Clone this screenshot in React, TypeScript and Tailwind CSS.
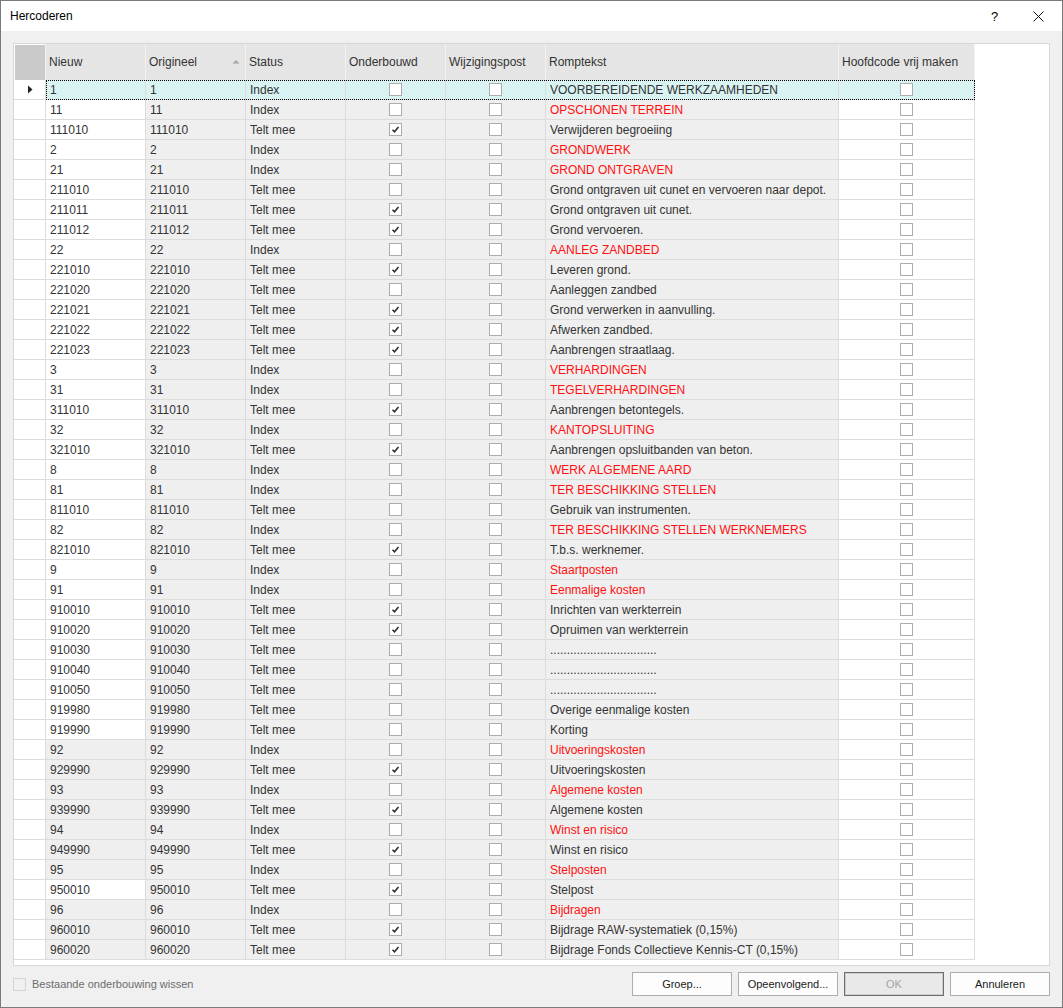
import clsx from "clsx";

type Row = [code: string, status: string, onder: boolean, text: string];

const rows: Row[] = [
  ["1", "Index", false, "VOORBEREIDENDE WERKZAAMHEDEN"],
  ["11", "Index", false, "OPSCHONEN TERREIN"],
  ["111010", "Telt mee", true, "Verwijderen begroeiing"],
  ["2", "Index", false, "GRONDWERK"],
  ["21", "Index", false, "GROND ONTGRAVEN"],
  ["211010", "Telt mee", false, "Grond ontgraven uit cunet en vervoeren naar depot."],
  ["211011", "Telt mee", true, "Grond ontgraven uit cunet."],
  ["211012", "Telt mee", true, "Grond vervoeren."],
  ["22", "Index", false, "AANLEG ZANDBED"],
  ["221010", "Telt mee", true, "Leveren grond."],
  ["221020", "Telt mee", false, "Aanleggen zandbed"],
  ["221021", "Telt mee", true, "Grond verwerken in aanvulling."],
  ["221022", "Telt mee", true, "Afwerken zandbed."],
  ["221023", "Telt mee", true, "Aanbrengen straatlaag."],
  ["3", "Index", false, "VERHARDINGEN"],
  ["31", "Index", false, "TEGELVERHARDINGEN"],
  ["311010", "Telt mee", true, "Aanbrengen betontegels."],
  ["32", "Index", false, "KANTOPSLUITING"],
  ["321010", "Telt mee", true, "Aanbrengen opsluitbanden van beton."],
  ["8", "Index", false, "WERK ALGEMENE AARD"],
  ["81", "Index", false, "TER BESCHIKKING STELLEN"],
  ["811010", "Telt mee", false, "Gebruik van instrumenten."],
  ["82", "Index", false, "TER BESCHIKKING STELLEN WERKNEMERS"],
  ["821010", "Telt mee", true, "T.b.s. werknemer."],
  ["9", "Index", false, "Staartposten"],
  ["91", "Index", false, "Eenmalige kosten"],
  ["910010", "Telt mee", true, "Inrichten van werkterrein"],
  ["910020", "Telt mee", true, "Opruimen van werkterrein"],
  ["910030", "Telt mee", false, "................................"],
  ["910040", "Telt mee", false, "................................"],
  ["910050", "Telt mee", false, "................................"],
  ["919980", "Telt mee", false, "Overige eenmalige kosten"],
  ["919990", "Telt mee", false, "Korting"],
  ["92", "Index", false, "Uitvoeringskosten"],
  ["929990", "Telt mee", true, "Uitvoeringskosten"],
  ["93", "Index", false, "Algemene kosten"],
  ["939990", "Telt mee", true, "Algemene kosten"],
  ["94", "Index", false, "Winst en risico"],
  ["949990", "Telt mee", true, "Winst en risico"],
  ["95", "Index", false, "Stelposten"],
  ["950010", "Telt mee", true, "Stelpost"],
  ["96", "Index", false, "Bijdragen"],
  ["960010", "Telt mee", true, "Bijdrage RAW-systematiek (0,15%)"],
  ["960020", "Telt mee", true, "Bijdrage Fonds Collectieve Kennis-CT (0,15%)"],
];

function Box({ checked }: { checked?: boolean }) {
  return (
    <span className="w-[13px] h-[13px] border border-[#adadad] bg-white flex items-center justify-center">
      {checked && (
        <svg width="11" height="11" viewBox="0 0 11 11">
          <path d="M2.5 5.8 L4.5 7.8 L8.5 3" fill="none" stroke="#2e2e2e" strokeWidth="1.6" />
        </svg>
      )}
    </span>
  );
}

function Button({ label, primary }: { label: string; primary?: boolean }) {
  return (
    <div
      className={clsx(
        "w-[100px] h-[24px] flex items-center justify-center text-[11px]",
        primary
          ? "border border-[#6d6d6d] bg-[#e9e9e9] text-[#a3a3a3] shadow-[inset_0_0_0_1px_#cdcdcd]"
          : "border border-[#adadad] bg-[#fdfdfd] text-[#1a1a1a]"
      )}
    >
      {label}
    </div>
  );
}

export default function App() {
  return (
    <div
      className="w-[1063px] h-[1008px] border border-[#7a7a7a] flex flex-col bg-[#f0f0f0] text-[#333]"
      style={{ fontFamily: '"Liberation Sans", Arial, sans-serif' }}
    >
      {/* title bar */}
      <div className="h-[30px] bg-white flex items-center shrink-0 relative">
        <span className="pl-[9px] text-[12px] text-black">Hercoderen</span>
        <span className="absolute left-[990px] top-[6px] text-[13px] text-black">?</span>
        <svg className="absolute left-[1032px] top-[10px]" width="11" height="11" viewBox="0 0 11 11">
          <path d="M0.5 0.5 L10.5 10.5 M10.5 0.5 L0.5 10.5" stroke="#111" strokeWidth="1" />
        </svg>
      </div>

      <div className="flex-1 flex flex-col px-3 pt-3">
        {/* grid */}
        <div className="h-[923px] border border-[#d7d7d7] bg-white text-[12px] flex flex-col">
          <div className="flex h-[36px] shrink-0">
            <div className="w-[32px] shrink-0 border-r border-[#f2f2f2] pl-px pt-px">
              <div className="h-full bg-[#cacaca]" />
            </div>
            {[
              ["Nieuw", "w-[100px]"],
              ["Origineel", "w-[100px]"],
              ["Status", "w-[100px]"],
              ["Onderbouwd", "w-[100px]"],
              ["Wijzigingspost", "w-[100px]"],
              ["Romptekst", "w-[293px]"],
              ["Hoofdcode vrij maken", "w-[136px]"],
            ].map(([label, w]) => (
              <div
                key={label}
                className={clsx(w, "shrink-0 bg-[#e5e5e5] border-r border-[#f2f2f2] flex items-center pl-[3px] relative")}
              >
                {label}
                {label === "Origineel" && (
                  <svg className="absolute right-[5px] top-[15px]" width="8" height="5" viewBox="0 0 8 5">
                    <path d="M0.5 4.5 L4 1 L7.5 4.5 Z" fill="#a6a6a6" />
                  </svg>
                )}
              </div>
            ))}
          </div>

          {rows.map(([code, status, onder, text], i) => {
            const sel = i === 0;
            const white = (i >= 1 && i <= 32) || code === "950010";
            const cell = sel ? "bg-[#d9f3f3]" : "bg-[#efefef]";
            return (
              <div key={code} className="flex h-5 shrink-0">
                <div className="w-[32px] shrink-0 bg-white border-r border-b border-[#dcdcdc] flex items-center justify-center">
                  {sel && (
                    <svg width="6" height="9" viewBox="0 0 6 9">
                      <path d="M1 0.5 L5.5 4.5 L1 8.5 Z" fill="#222" />
                    </svg>
                  )}
                </div>
                <div
                  className={clsx(
                    "flex",
                    sel && "outline outline-1 outline-dotted outline-black -outline-offset-1"
                  )}
                >
                  <div
                    className={clsx(
                      "w-[100px] border-r border-b border-[#dcdcdc] flex items-center pl-[4px]",
                      sel ? "bg-[#d9f3f3]" : white ? "bg-white" : "bg-[#efefef]"
                    )}
                  >
                    {code}
                  </div>
                  <div className={clsx("w-[100px] border-r border-b border-[#dcdcdc] flex items-center pl-[4px]", cell)}>
                    {code}
                  </div>
                  <div className={clsx("w-[100px] border-r border-b border-[#dcdcdc] flex items-center pl-[4px]", cell)}>
                    {status}
                  </div>
                  <div className={clsx("w-[100px] border-r border-b border-[#dcdcdc] flex items-center justify-center", cell)}>
                    <Box checked={onder} />
                  </div>
                  <div className={clsx("w-[100px] border-r border-b border-[#dcdcdc] flex items-center justify-center", cell)}>
                    <Box />
                  </div>
                  <div
                    className={clsx(
                      "w-[293px] border-r border-b border-[#dcdcdc] flex items-center pl-[4px] whitespace-nowrap overflow-hidden",
                      cell,
                      status === "Index" && !sel ? "text-[#ff1010]" : "text-[#333]"
                    )}
                  >
                    {text}
                  </div>
                  <div
                    className={clsx(
                      "w-[136px] border-r border-b border-[#dcdcdc] flex items-center justify-center",
                      sel ? "bg-[#d9f3f3]" : "bg-white"
                    )}
                  >
                    <Box />
                  </div>
                </div>
              </div>
            );
          })}
        </div>

        {/* footer */}
        <div className="flex items-center mt-[6px] h-[24px]">
          <span className="w-[13px] h-[13px] border border-[#d4d4d4] bg-[#f0f0f0]" />
          <span className="ml-[6px] text-[11px] text-[#6d6d6d]">Bestaande onderbouwing wissen</span>
          <div className="ml-auto flex gap-[6px]">
            <Button label="Groep..." />
            <Button label="Opeenvolgend..." />
            <Button label="OK" primary />
            <Button label="Annuleren" />
          </div>
        </div>
      </div>
    </div>
  );
}
